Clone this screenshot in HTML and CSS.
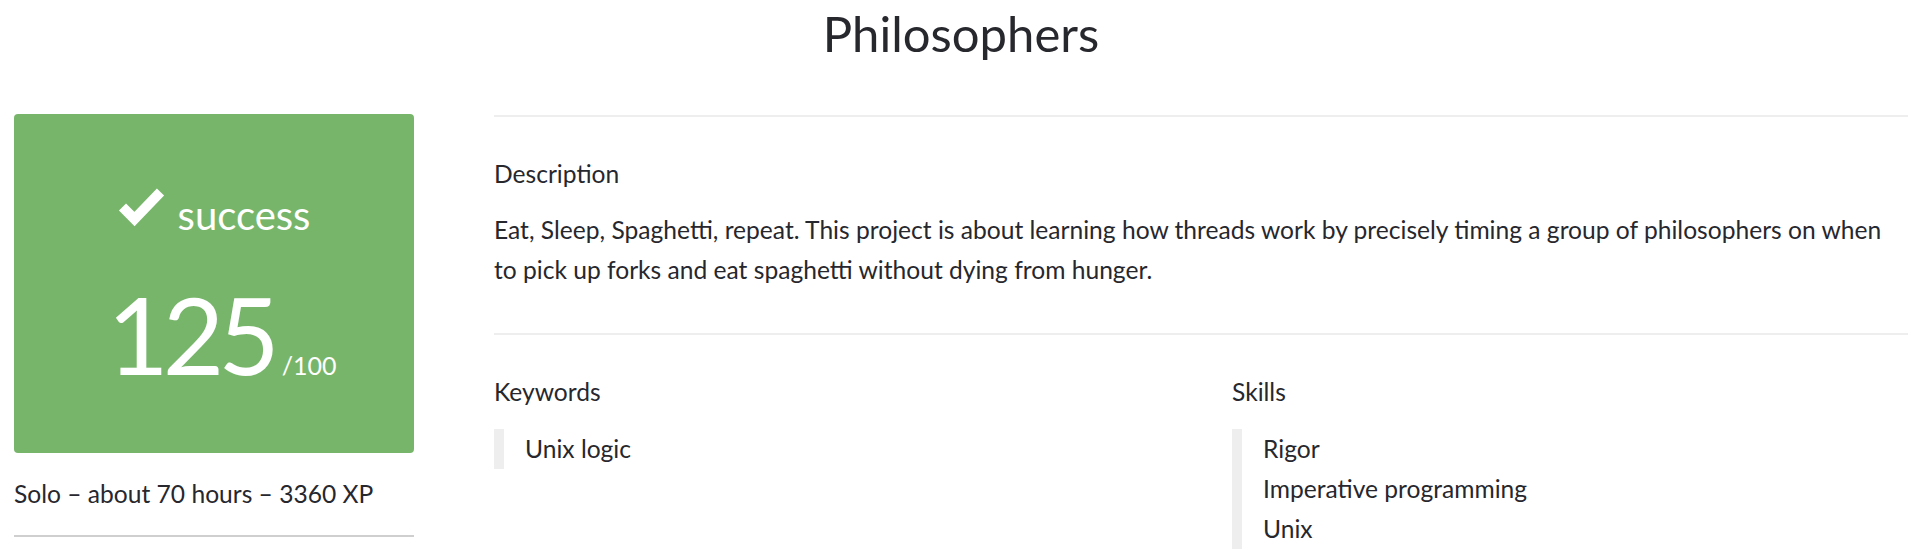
FILE: index.html
```html
<!DOCTYPE html>
<html lang="en">
<head>
<meta charset="utf-8">
<title>Philosophers</title>
<link rel="stylesheet" href="styles.css">
</head>
<body>
<div class="page">
  <h1 class="title">Philosophers</h1>
  <div class="project">
    <aside class="summary">
      <div class="status-card">
        <div class="status">
          <svg class="check" width="47" height="41" viewBox="0 0 47 41" aria-hidden="true"><polyline points="4.5,21 16.5,33 42.5,6" fill="none" stroke="#fff" stroke-width="10" stroke-linejoin="miter" stroke-linecap="butt"/></svg><span class="status-text">success</span>
        </div>
        <div class="score"><span class="score-value">125</span><span class="score-max">/100</span></div>
      </div>
      <p class="meta">Solo – about 70 hours – 3360 XP</p>
    </aside>
    <main class="details">
      <section class="block">
        <h2 class="label">Description</h2>
        <p class="text">Eat, Sleep, Spaghetti, repeat. This project is about learning how threads work by precisely timing a group of philosophers on when<br>to pick up forks and eat spaghetti without dying from hunger.</p>
      </section>
      <section class="block columns">
        <div class="column">
          <h2 class="label">Keywords</h2>
          <ul class="tags">
            <li>Unix logic</li>
          </ul>
        </div>
        <div class="column">
          <h2 class="label">Skills</h2>
          <ul class="tags">
            <li>Rigor</li>
            <li>Imperative programming</li>
            <li>Unix</li>
          </ul>
        </div>
      </section>
    </main>
  </div>
</div>
</body>
</html>
```
FILE: styles.css
```css
html, body {
  margin: 0;
  background: #ffffff;
}

body {
  font-family: "Lato", "Liberation Sans", sans-serif;
  color: #27272e;
  font-size: 24.6px;
  line-height: 40px;
}

.page {
  padding: 0 10px 0 14px;
}

.title {
  margin: 0;
  padding-top: 3px;
  font-size: 49px;
  line-height: 60px;
  font-weight: 400;
  text-align: center;
}

.project {
  display: flex;
  gap: 80px;
  margin-top: 51px;
}

.summary {
  flex: 0 0 400px;
  width: 400px;
}

.status-card {
  height: 339px;
  box-sizing: border-box;
  padding-top: 72px;
  background: #77b66a;
  border-radius: 4px;
  color: #ffffff;
  text-align: center;
}

.status {
  font-size: 40px;
  line-height: 50px;
  white-space: nowrap;
}

.check {
  vertical-align: baseline;
  margin: 0 13px 3px 0;
}

.score {
  margin-top: 43.5px;
  padding-left: 16px;
  line-height: 100px;
  white-space: nowrap;
}

.score-value {
  font-size: 106px;
  font-weight: 400;
  letter-spacing: -6px;
}

.score-max {
  margin-left: 8px;
  font-size: 25px;
  line-height: 25px;
}

.meta {
  margin: 20.5px 0 0;
  padding-bottom: 21.5px;
  border-bottom: 2px solid #cfcfcf;
  white-space: nowrap;
}

.details {
  flex: 1;
  min-width: 0;
  margin-top: 1px;
}

.block {
  border-top: 2px solid #eeeeee;
  padding-top: 36.5px;
}

.block:first-child {
  padding-bottom: 42.5px;
}

.label {
  margin: 0;
  font-size: 24.6px;
  line-height: 40px;
  font-weight: 400;
}

.text {
  margin: 16px 0 0;
  line-height: 40.5px;
}

.columns {
  display: grid;
  grid-template-columns: 1fr 1fr;
  column-gap: 62px;
}

.tags {
  list-style: none;
  margin: 17.5px 0 0;
  padding: 0 0 0 21px;
  border-left: 10px solid #eeeeee;
}

.tags li {
  line-height: 40px;
}
```
